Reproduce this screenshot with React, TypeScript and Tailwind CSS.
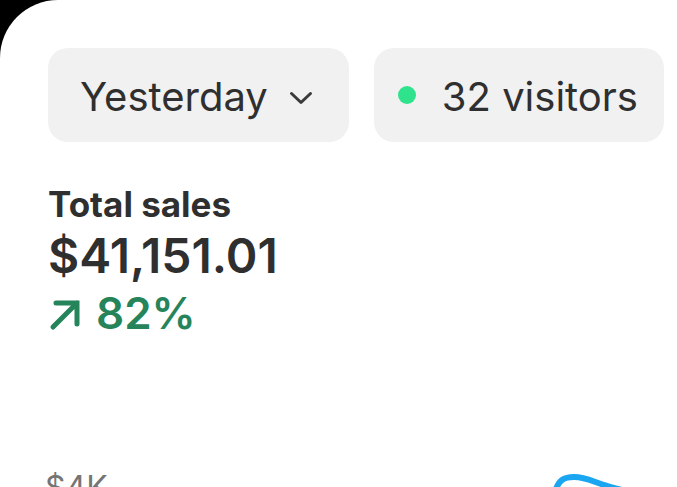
import React from "react";

export default function App() {
  return (
    <div className="w-[677px] h-[487px] bg-black overflow-hidden" style={{ fontFamily: "Inter, 'Noto Sans', sans-serif" }}>
      <div className="w-full h-full bg-white rounded-tl-[58px] pl-[48px] pt-[48px] text-[#2f2f2f]">
        <div className="flex gap-[25px]">
          <div className="h-[94px] rounded-[20px] bg-[#f1f1f2] flex items-center pl-[32px] pr-[36px] gap-[21px]">
            <span className="text-[40px] leading-none mt-[3px]">Yesterday</span>
            <svg width="24" height="16" viewBox="0 0 24 16" className="mt-[5px]">
              <path d="M2.5 3.5 L12 12.5 L21.5 3.5" fill="none" stroke="#3a3a3a" strokeWidth="3" strokeLinecap="round" strokeLinejoin="round" />
            </svg>
          </div>
          <div className="h-[94px] rounded-[20px] bg-[#f1f1f2] flex items-center pl-[24px] pr-[26px] gap-[26px]">
            <span className="w-[18px] h-[18px] rounded-full bg-[#2fe28c]" />
            <span className="text-[40px] leading-none mt-[3px]">32 visitors</span>
          </div>
        </div>

        <div className="mt-[42px] text-[35px] leading-[40px] font-bold">Total sales</div>
        <div className="mt-[8px] text-[48px] leading-[48px] font-semibold">$41,151.01</div>
        <div className="mt-[11px] flex items-center gap-[14px] text-[44px] leading-[44px] font-semibold text-[#25845a]">
          <svg width="34" height="34" viewBox="0 0 34 34" className="mt-[4px] shrink-0">
            <path d="M5 29 L29 5 M8 5 L29 5 L29 26" fill="none" stroke="#25845a" strokeWidth="5" strokeLinecap="round" strokeLinejoin="miter" />
          </svg>
          <span>82%</span>
        </div>

        <div className="relative mt-[135px] h-[40px]">
          <span className="ml-[-3px] text-[32px] leading-[36px] text-[#757575]">$4K</span>
          <svg className="absolute left-[500px] top-[-3px]" width="90" height="30" viewBox="0 0 90 30">
            <path d="M8 22 C11 14 15 10 26 10 C37 10 44 14 53 17 C62 20 70 22 78 24" fill="none" stroke="#1aa6f0" strokeWidth="6" strokeLinecap="round" />
          </svg>
        </div>
      </div>
    </div>
  );
}
